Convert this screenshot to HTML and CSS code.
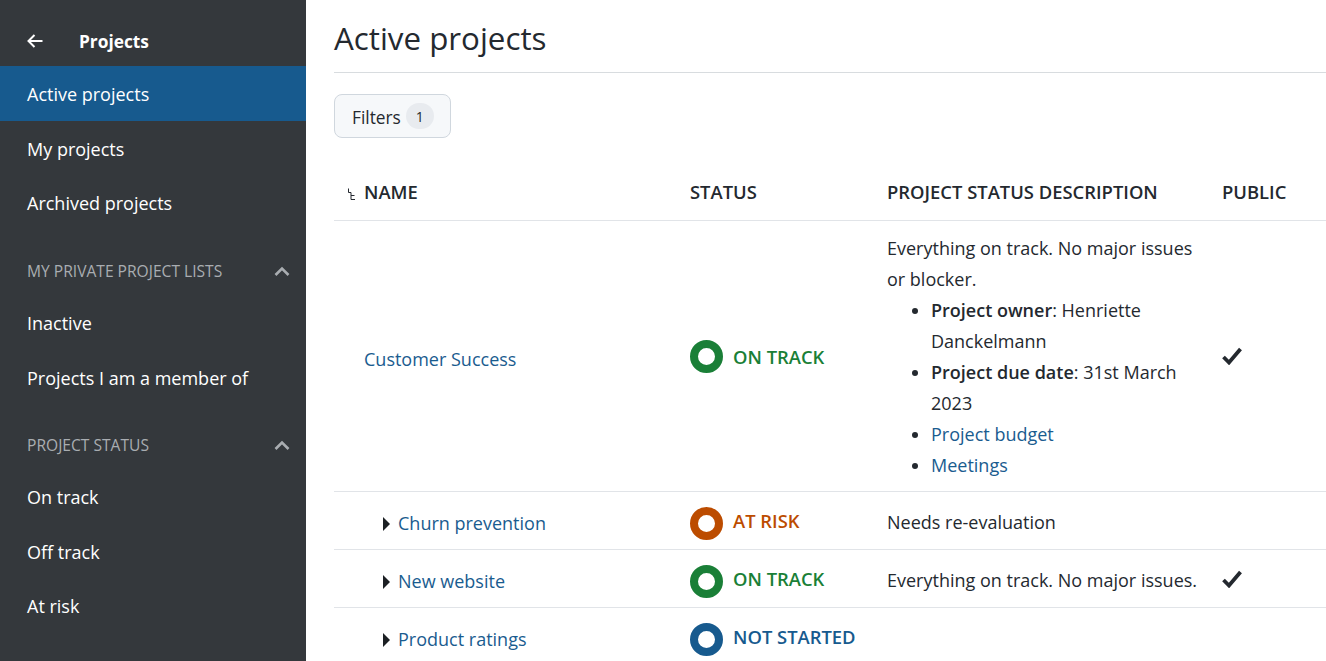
FILE: index.html
```html
<!DOCTYPE html>
<html lang="en">
<head>
    <meta charset="UTF-8">
    <meta name="viewport" content="width=device-width, initial-scale=1.0">
    <link rel="stylesheet" href="styles.css">
    <title>Active projects</title>
</head>
<body>

<div class="sidebar">
    <div class="sidebar-head">
        <svg class="back-icon" width="16" height="16" viewBox="0 0 16 16"><path d="M15.5 8H1.5M7.5 2L1.5 8l6 6" fill="none" stroke="#fff" stroke-width="2"/></svg>
        <strong>Projects</strong>
    </div>

    <a class="side-link active" href="#">Active projects</a>
    <a class="side-link" href="#">My projects</a>
    <a class="side-link" href="#">Archived projects</a>

    <div class="side-section">
        <span>MY PRIVATE PROJECT LISTS</span>
        <svg width="16" height="10" viewBox="0 0 16 10"><path d="M1.5 9L8 2.5 14.5 9" fill="none" stroke="#a9adb1" stroke-width="2.6"/></svg>
    </div>
    <a class="side-link" href="#">Inactive</a>
    <a class="side-link" href="#">Projects I am a member of</a>

    <div class="side-section">
        <span>PROJECT STATUS</span>
        <svg width="16" height="10" viewBox="0 0 16 10"><path d="M1.5 9L8 2.5 14.5 9" fill="none" stroke="#a9adb1" stroke-width="2.6"/></svg>
    </div>
    <a class="side-link" href="#">On track</a>
    <a class="side-link" href="#">Off track</a>
    <a class="side-link" href="#">At risk</a>
</div>

<div class="main">
    <h1>Active projects</h1>

    <button class="filters">Filters <span class="count">1</span></button>

    <table class="projects">
        <thead>
            <tr>
                <th class="col-name">
                    <svg class="tree-icon" width="8" height="12" viewBox="0 0 8 12"><path d="M1.5 0.5V4.5H4V11.5H8M4 7.5H7.5" fill="none" stroke="#24292f" stroke-width="1"/></svg>NAME
                </th>
                <th class="col-status">STATUS</th>
                <th class="col-desc">PROJECT STATUS DESCRIPTION</th>
                <th class="col-public">PUBLIC</th>
            </tr>
        </thead>
        <tbody>
            <tr class="parent">
                <td class="name"><a href="#">Customer Success</a></td>
                <td><div class="status on-track"><span class="ring"></span>ON TRACK</div></td>
                <td class="desc">
                    Everything on track. No major issues or blocker.
                    <ul>
                        <li><b>Project owner</b><span>: Henriette</span> <span>Danckelmann</span></li>
                        <li><b>Project due date</b><span>: 31st March</span> <span>2023</span></li>
                        <li><a href="#">Project budget</a></li>
                        <li><a href="#">Meetings</a></li>
                    </ul>
                </td>
                <td><svg class="check" width="20" height="18" viewBox="0 0 20 18"><path d="M1.5 10l5.5 5.5L18.5 2" fill="none" stroke="#24292f" stroke-width="3.8"/></svg></td>
            </tr>
            <tr class="child">
                <td class="name"><span class="caret"></span><a href="#">Churn prevention</a></td>
                <td><div class="status at-risk"><span class="ring"></span><span class="label">AT RISK</span></div></td>
                <td class="desc">Needs re-evaluation</td>
                <td></td>
            </tr>
            <tr class="child">
                <td class="name"><span class="caret"></span><a href="#">New website</a></td>
                <td><div class="status on-track"><span class="ring"></span><span class="label">ON TRACK</span></div></td>
                <td class="desc">Everything on track. No major issues.</td>
                <td><svg class="check" width="20" height="18" viewBox="0 0 20 18"><path d="M1.5 10l5.5 5.5L18.5 2" fill="none" stroke="#24292f" stroke-width="3.8"/></svg></td>
            </tr>
            <tr class="child">
                <td class="name"><span class="caret"></span><a href="#">Product ratings</a></td>
                <td><div class="status not-started"><span class="ring"></span><span class="label">NOT STARTED</span></div></td>
                <td class="desc"></td>
                <td></td>
            </tr>
        </tbody>
    </table>
</div>

</body>
</html>
```

FILE: styles.css
```css
html, body {
    height: 100%;
}

body {
    font-family: "Open Sans", "Noto Sans", sans-serif;
    font-size: 18px;
    color: #24292f;
    background-color: #ffffff;
    margin: 0;
    display: flex;
    overflow: hidden;
}

a {
    color: #1a5c8f;
    text-decoration: none;
}

/* left menu */
.sidebar {
    width: 306px;
    flex-shrink: 0;
    background-color: #34383c;
    color: #ffffff;
}

.sidebar-head {
    height: 66px;
    padding: 16px 0 0 27px;
    box-sizing: border-box;
    display: flex;
    align-items: center;
    font-size: 17.3px;
}

.sidebar-head strong {
    font-weight: 700;
}

.back-icon {
    margin-right: 36px;
}

.side-link {
    display: flex;
    align-items: center;
    height: 54.6px;
    padding: 2px 0 0 27px;
    box-sizing: border-box;
    color: #ffffff;
}

.side-link.active {
    background-color: #175a8e;
}

.side-section {
    display: flex;
    justify-content: space-between;
    align-items: center;
    height: 28px;
    margin-top: 27px;
    margin-bottom: 10px;
    padding: 1px 16px 0 27px;
    box-sizing: border-box;
    font-size: 15.6px;
    color: #a9adb1;
}

/* content */
.main {
    flex: 1;
    min-width: 0;
    padding-left: 28px;
}

h1 {
    margin: 0;
    height: 73px;
    padding-top: 14px;
    box-sizing: border-box;
    border-bottom: 1px solid #d8dcdf;
    font-size: 31.3px;
    font-weight: 400;
    line-height: 48px;
}

.filters {
    display: flex;
    align-items: center;
    gap: 5px;
    height: 44px;
    margin-top: 21px;
    padding: 2px 16px 0 17px;
    font: inherit;
    font-size: 17.3px;
    color: inherit;
    background-color: #f6f8fa;
    border: 1px solid #d0d7de;
    border-radius: 8px;
}

.count {
    width: 28px;
    height: 26px;
    margin-top: -2px;
    line-height: 28px;
    font-size: 14px;
    border-radius: 13px;
    background-color: #e8ebef;
}

.projects {
    width: 1010px;
    margin-top: 22px;
    table-layout: fixed;
    border-collapse: collapse;
}

.col-name { width: 356px; }
.col-status { width: 197px; }
.col-desc { width: 335px; }

th {
    height: 60px;
    padding: 4px 0 0;
    box-sizing: border-box;
    text-align: left;
    font-size: 18.4px;
    font-weight: 600;
}

.tree-icon {
    margin: 0 9px 0 13px;
    vertical-align: -1px;
}

td {
    padding: 11px 0;
    border-top: 1px solid #e1e4e8;
    vertical-align: middle;
}

.parent .name {
    padding-top: 18px;
}

.parent .status {
    padding-top: 2px;
}

.child td {
    height: 58px;
    box-sizing: border-box;
    padding: 14px 0 8px;
}

.child .desc {
    padding: 12px 20px 8px 0;
}

.name {
    padding-left: 30px;
}

.child .name {
    padding-left: 49px;
}

.caret {
    display: inline-block;
    margin-right: 8px;
    border-left: 7.5px solid #1c2024;
    border-top: 7px solid transparent;
    border-bottom: 7px solid transparent;
    vertical-align: -1px;
}

.status {
    display: flex;
    align-items: center;
    font-size: 18.4px;
    font-weight: 600;
}

.label {
    padding-bottom: 6px;
}

.ring {
    width: 33px;
    height: 33px;
    margin-right: 10px;
    box-sizing: border-box;
    border: 8.5px solid;
    border-radius: 50%;
}

.on-track { color: #1a7f37; }
.at-risk { color: #bc4c00; }
.not-started { color: #175a8e; }

.desc {
    line-height: 31px;
    padding: 12px 20px 10px 0;
}

.desc ul {
    margin: 0;
    padding-left: 44px;
}

.desc b {
    font-weight: 600;
}

.check {
    display: block;
}

.child .check {
    margin-bottom: 4px;
}
```
